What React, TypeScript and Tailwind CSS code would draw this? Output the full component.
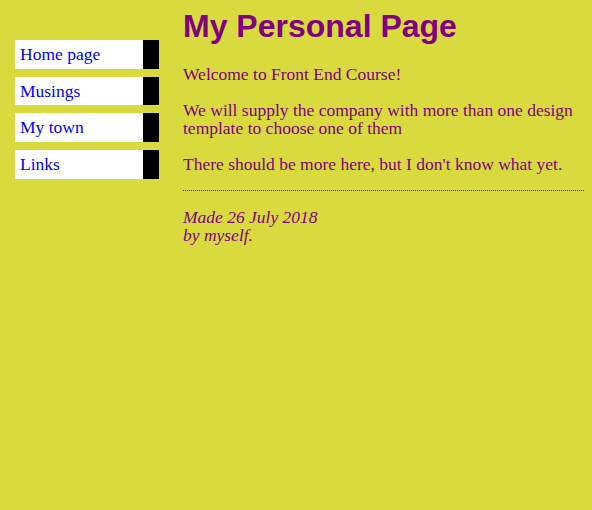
import React from "react";

const links = ["Home page", "Musings", "My town", "Links"];

export default function App() {
  return (
    <div className="flex min-h-screen bg-[#d8da3d] font-['Liberation_Serif',serif] text-[17.5px] text-[#800080]">
      {/* navbar */}
      <ul className="w-[183px] shrink-0 pl-[15px] pt-[32px]">
        {links.map((l) => (
          <li
            key={l}
            className="mt-[8.07px] w-[144px] border-r-[16px] border-black bg-white px-[5px] py-[4.8px] leading-[19px]"
          >
            <a href="#" className="text-[#0000ff] no-underline">
              {l}
            </a>
          </li>
        ))}
      </ul>

      <main className="flex-1 pr-2 pt-2">
        <h1 className="font-['Liberation_Sans',Arial,sans-serif] text-[32px] font-bold leading-[37px]">
          My Personal Page
        </h1>

        <p className="mt-[20px] leading-[18px]">Welcome to Front End Course!</p>
        <p className="mt-[18px] leading-[18px]">
          We will supply the company with more than one design template to choose one of them
        </p>
        <p className="mt-[18px] leading-[18px]">
          There should be more here, but I don't know what yet.
        </p>

        <address className="mt-[17px] border-t border-dotted border-[#800080] pt-[17px] leading-[18px]">
          Made 26 July 2018
          <br />
          by myself.
        </address>
      </main>
    </div>
  );
}
